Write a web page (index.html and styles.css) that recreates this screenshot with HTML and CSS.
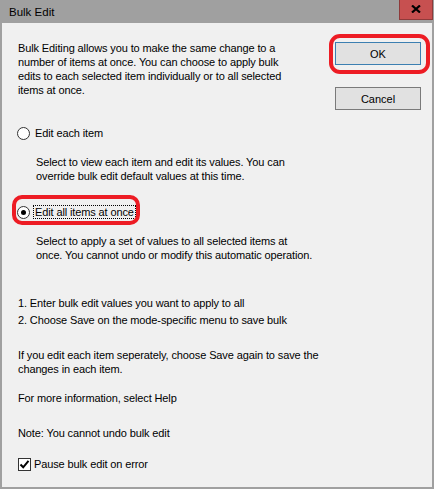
FILE: index.html
```html
<!DOCTYPE html>
<html>
<head>
<meta charset="utf-8">
<title>Bulk Edit</title>
<link rel="stylesheet" href="styles.css">
</head>
<body>
<div class="window">
  <div class="titlebar">
    <span class="title">Bulk Edit</span>
    <div class="close">
      <svg width="10" height="8" viewBox="0 0 10 8"><path d="M1 0.5 L9 7.5 M9 0.5 L1 7.5" stroke="#000" stroke-width="2.2" fill="none"/></svg>
    </div>
  </div>
  <div class="client">
    <div class="main">
      <p class="intro">Bulk Editing allows you to make the same change to a<br>number of items at once. You can choose to apply bulk<br>edits to each selected item individually or to all selected<br>items at once.</p>

      <div class="option opt1">
        <span class="radio"></span>
        <span class="label">Edit each item</span>
      </div>
      <p class="desc d1">Select to view each item and edit its values. You can<br>override bulk edit default values at this time.</p>

      <div class="option opt2">
        <span class="radio checked"></span>
        <span class="label focus">Edit all items at once</span>
        <span class="mark mark-radio"></span>
      </div>
      <p class="desc d2">Select to apply a set of values to all selected items at<br>once. You cannot undo or modify this automatic operation.</p>

      <p class="line s1">1. Enter bulk edit values you want to apply to all</p>
      <p class="line s2">2. Choose Save on the mode-specific menu to save bulk</p>
      <p class="line n1">If you edit each item seperately, choose Save again to save the<br>changes in each item.</p>
      <p class="line n2">For more information, select Help</p>
      <p class="line n3">Note: You cannot undo bulk edit</p>

      <div class="check">
        <span class="box">
          <svg width="11" height="11" viewBox="0 0 11 11"><path d="M1.5 5.5 L4.2 8.3 L9.5 1.8" stroke="#000" stroke-width="2" fill="none"/></svg>
        </span>
        <span class="label">Pause bulk edit on error</span>
      </div>
    </div>
    <div class="buttons">
      <div class="btn-wrap">
        <div class="btn btn-ok">OK</div>
        <span class="mark mark-ok"></span>
      </div>
      <div class="btn">Cancel</div>
    </div>
  </div>
</div>
</body>
</html>
```

FILE: styles.css
```css
html, body {
  margin: 0;
  padding: 0;
  background: #f0f0f0;
}
.window {
  width: 434px;
  height: 489px;
  box-sizing: border-box;
  background: #a0a0a0;
  padding: 0 2px 2px 2px;
  display: flex;
  flex-direction: column;
  font-family: "Liberation Sans", Arial, sans-serif;
  font-size: 11px;
  color: #000;
}
.titlebar {
  height: 23px;
  margin: 0 -2px;
  display: flex;
  align-items: flex-start;
  justify-content: space-between;
  flex: none;
}
.title {
  font-size: 11.5px;
  line-height: 14px;
  margin: 5px 0 0 9px;
  color: #000;
}
.close {
  width: 34px;
  height: 20px;
  box-sizing: border-box;
  margin-right: 1px;
  background: #c75050;
  border: 1px solid #8e3a3a;
  border-top: none;
  display: flex;
  align-items: center;
  justify-content: center;
  padding-bottom: 1px;
}
.close svg { display: block; }
.client {
  flex: 1;
  background: #f0f0f0;
  display: flex;
  padding: 18px 11px 0 15px;
  letter-spacing: -0.12px;
  line-height: 14px;
}
.main {
  flex: 1;
}
p { margin: 0; }
.option {
  display: flex;
  align-items: center;
  height: 14px;
  position: relative;
}
.opt1 { margin-top: 29px; }
.opt2 { margin-top: 22px; }
.radio {
  width: 13px;
  height: 13px;
  box-sizing: border-box;
  border: 1px solid #333;
  border-radius: 50%;
  background: #fff;
  display: flex;
  align-items: center;
  justify-content: center;
  flex: none;
}
.radio.checked::after {
  content: "";
  width: 5px;
  height: 5px;
  border-radius: 50%;
  background: #000;
}
.label {
  margin-left: 3px;
  padding: 0 1px;
  border: 1px dotted transparent;
  line-height: 12px;
}
.label.focus {
  border-color: #000;
}
.desc {
  padding-left: 19px;
  margin-top: 15px;
}
.s1 { margin-top: 34px; padding-left: 1px; }
.s2 { margin-top: 3px; padding-left: 1px; }
.n1 { margin-top: 21px; padding-left: 1px; }
.n2 { margin-top: 15px; padding-left: 1px; }
.n3 { margin-top: 21px; padding-left: 1px; }
.intro { padding-left: 1px; }
.check {
  margin-top: 17px;
  height: 14px;
  display: flex;
  align-items: center;
  padding-left: 1px;
}
.box {
  width: 13px;
  height: 13px;
  box-sizing: border-box;
  border: 1px solid #333;
  background: #fff;
  display: flex;
  align-items: center;
  justify-content: center;
}
.box svg { display: block; }
.check .label {
  margin-left: 2px;
  border: none;
  padding: 0 0 0 1px;
}
.buttons {
  width: 86px;
  padding-top: 1px;
  display: flex;
  flex-direction: column;
  gap: 22px;
  letter-spacing: 0;
}
.btn-wrap { position: relative; }
.btn {
  height: 23px;
  box-sizing: border-box;
  border: 1px solid #7a7a7a;
  background: #e1e1e1;
  display: flex;
  align-items: center;
  justify-content: center;
  font-size: 11px;
}
.btn-ok {
  border-color: #3c7fb1;
}
.mark {
  position: absolute;
  box-sizing: border-box;
  border: 4px solid #ed1c24;
  pointer-events: none;
}
.mark-ok {
  left: -6px;
  top: -8px;
  width: 101px;
  height: 40px;
  border-radius: 11px;
}
.mark-radio {
  left: -5px;
  top: -10px;
  width: 128px;
  height: 30px;
  border-radius: 10px;
}
```
